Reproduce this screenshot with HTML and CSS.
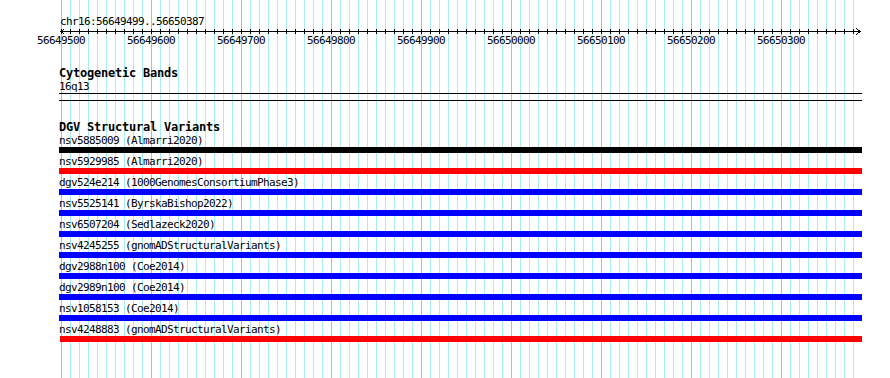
FILE: index.html
```html
<html>
	<head>
		<title>chr16:56649499..56650387</title>
		<link rel="stylesheet" href="styles.css">
	</head>
	<body>
		<div class="grid"></div>
		<div id="panel">
			<div class="ruler">
				<div class="locus">chr16:56649499..56650387</div>
				<svg class="axis" width="803" height="8" viewBox="0 0 803 8">
					<defs>
						<pattern id="tick" x="2" y="1" width="9" height="5" patternUnits="userSpaceOnUse">
							<rect width="1" height="5" fill="#000"/>
						</pattern>
					</defs>
					<rect x="2" y="1" width="793" height="5" fill="url(#tick)"/>
					<rect x="2" y="3" width="800" height="1" fill="#000"/>
					<path d="M5.5 0.5 L2 3.5 L5.5 6.5" fill="none" stroke="#000"/>
					<path d="M797.5 0.5 L801 3.5 L797.5 6.5" fill="none" stroke="#000"/>
				</svg>
				<div class="ticklabels">
					<span>56649500</span>
					<span>56649600</span>
					<span>56649700</span>
					<span>56649800</span>
					<span>56649900</span>
					<span>56650000</span>
					<span>56650100</span>
					<span>56650200</span>
					<span>56650300</span>
				</div>
			</div>
			<div class="track" id="cyto">
				<div class="title">Cytogenetic Bands</div>
				<div class="label">16q13</div>
				<div class="band"></div>
			</div>
			<div class="track" id="dgv">
				<div class="title">DGV Structural Variants</div>
				<div class="feature"><div class="label">nsv5885009 (Almarri2020)</div><div class="bar black"></div></div>
				<div class="feature"><div class="label">nsv5929985 (Almarri2020)</div><div class="bar red"></div></div>
				<div class="feature"><div class="label">dgv524e214 (1000GenomesConsortiumPhase3)</div><div class="bar blue"></div></div>
				<div class="feature"><div class="label">nsv5525141 (ByrskaBishop2022)</div><div class="bar blue"></div></div>
				<div class="feature"><div class="label">nsv6507204 (Sedlazeck2020)</div><div class="bar blue"></div></div>
				<div class="feature"><div class="label">nsv4245255 (gnomADStructuralVariants)</div><div class="bar blue"></div></div>
				<div class="feature"><div class="label">dgv2988n100 (Coe2014)</div><div class="bar blue"></div></div>
				<div class="feature"><div class="label">dgv2989n100 (Coe2014)</div><div class="bar blue"></div></div>
				<div class="feature"><div class="label">nsv1058153 (Coe2014)</div><div class="bar blue"></div></div>
				<div class="feature"><div class="label">nsv4248883 (gnomADStructuralVariants)</div><div class="bar red late"></div></div>
			</div>
		</div>
	</body>
</html>
```

FILE: styles.css
```css
body{
	margin: 0;
	height: 378px;
	overflow: hidden;
	background-color: #ffffff;
	color: #000000;
	font-family: "DejaVu Sans Mono", monospace;
	font-size: 11px;
	letter-spacing: -0.62px;
	line-height: 13px;
	position: relative;
}
/* 10bp grid, darker every 100bp */
.grid{
	position: absolute;
	top: 0px;
	left: 61px;
	width: 793px;
	height: 378px;
	background-image:
		linear-gradient(to right, #90c6e8 0 1px, transparent 1px),
		linear-gradient(to right, #a8ecf2 0 1px, transparent 1px);
	background-size: 90px 100%, 9px 100%;
	background-repeat: repeat-x;
}
#panel{
	position: relative;
	margin-left: 59px;
	width: 803px;
	padding-top: 15px;
}
.locus{
	padding-left: 1px;
}
.axis{
	display: block;
	shape-rendering: crispEdges;
}
.ticklabels{
	display: flex;
	margin-top: -2px;
	margin-left: -22px;
	white-space: nowrap;
}
.ticklabels span{
	flex: none;
	width: 90px;
}
.track{
	margin-top: 20px;
}
.title{
	font-weight: bold;
	font-size: 12px;
	letter-spacing: -0.22px;
}
.label{
	white-space: nowrap;
}
.band{
	box-sizing: border-box;
	height: 8px;
	border-top: 1px solid #000000;
	border-bottom: 1px solid #000000;
}
.feature{
	margin-bottom: 2px;
}
.bar{
	height: 6px;
}
.bar.late{
	margin-left: 1px;
}
.black{
	background-color: #000000;
}
.red{
	background-color: #ff0000;
}
.blue{
	background-color: #0000ff;
}
```
